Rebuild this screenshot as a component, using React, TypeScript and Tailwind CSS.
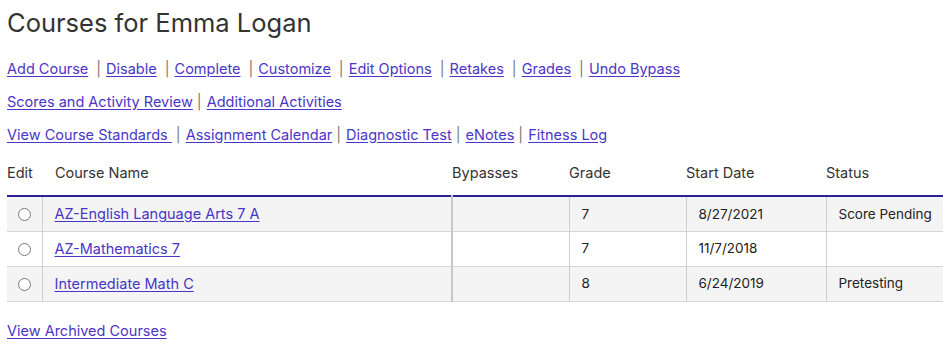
import React from 'react';

const linkCls = 'text-[#4a35c9] underline underline-offset-2';

const Bar: React.FC<{ wide?: boolean }> = ({ wide }) => (
  <span className={wide ? 'ml-[8px] mr-[5px] text-[#777]' : 'ml-[4px] mr-[5px] text-[#777]'}>|</span>
);

const LinkRow: React.FC<{ links: string[]; wide?: boolean }> = ({ links, wide }) => (
  <div className="h-[33px] flex items-center">
    {links.map((l, i) => (
      <React.Fragment key={l}>
        {i > 0 && <Bar wide={wide} />}
        <a href="#" className={linkCls}>
          {l}
        </a>
      </React.Fragment>
    ))}
  </div>
);

const rows = [
  { name: 'AZ-English Language Arts 7 A', grade: '7', start: '8/27/2021', status: 'Score Pending' },
  { name: 'AZ-Mathematics 7', grade: '7', start: '11/7/2018', status: '' },
  { name: 'Intermediate Math C', grade: '8', start: '6/24/2019', status: 'Pretesting' },
];

const cellText = 'p-0 pl-[12px] text-[13.5px] text-[#222]';

export default function App() {
  return (
    <div className="bg-white pl-[7px] text-[14.5px] text-[#222] font-['Inter','Liberation_Sans',sans-serif]">
      <h1 className="pt-[8px] text-[25.5px] leading-[30px] font-normal text-[#333]">Courses for Emma Logan</h1>
      <div className="mt-[14px]">
        <LinkRow
          wide
          links={['Add Course', 'Disable', 'Complete', 'Customize', 'Edit Options', 'Retakes', 'Grades', 'Undo Bypass']}
        />
        <LinkRow links={['Scores and Activity Review', 'Additional Activities']} />
        <LinkRow
          links={['View Course Standards\u00a0', 'Assignment Calendar', 'Diagnostic Test', 'eNotes', 'Fitness Log']}
        />
      </div>
      <table className="mt-[5px] w-[936px] border-collapse table-fixed">
        <colgroup>
          <col className="w-[35px]" />
          <col className="w-[410px]" />
          <col className="w-[117px]" />
          <col className="w-[117px]" />
          <col className="w-[140px]" />
          <col className="w-[117px]" />
        </colgroup>
        <thead>
          <tr className="h-[40px] border-b-2 border-[#2b2190] text-left text-[#333]">
            <th className="font-normal p-0 pb-[5px]">Edit</th>
            <th className="font-normal p-0 pb-[5px] pl-[13px]">Course Name</th>
            <th className="font-normal p-0 pb-[5px]">Bypasses</th>
            <th className="font-normal p-0 pb-[5px]">Grade</th>
            <th className="font-normal p-0 pb-[5px]">Start Date</th>
            <th className="font-normal p-0 pb-[5px]">Status</th>
          </tr>
        </thead>
        <tbody>
          {rows.map((r, i) => (
            <tr key={r.name} className={`h-[35px] border-b border-[#d6d6d6] ${i % 2 === 0 ? 'bg-[#f4f4f4]' : 'bg-white'}`}>
              <td className="p-0 text-center border-r border-[#cfcfcf]">
                <input type="radio" name="course" className="w-[13px] h-[13px] align-middle accent-[#777]" />
              </td>
              <td className="p-0 pl-[12px] border-r-2 border-[#c8c8c8]">
                <a href="#" className={linkCls}>
                  {r.name}
                </a>
              </td>
              <td className="p-0 border-r border-[#cfcfcf]"></td>
              <td className={`${cellText} border-r border-[#cfcfcf]`}>{r.grade}</td>
              <td className={`${cellText} border-r border-[#cfcfcf]`}>{r.start}</td>
              <td className={cellText}>{r.status}</td>
            </tr>
          ))}
        </tbody>
      </table>
      <div className="mt-[18px]">
        <a href="#" className={linkCls}>
          View Archived Courses
        </a>
      </div>
    </div>
  );
}
